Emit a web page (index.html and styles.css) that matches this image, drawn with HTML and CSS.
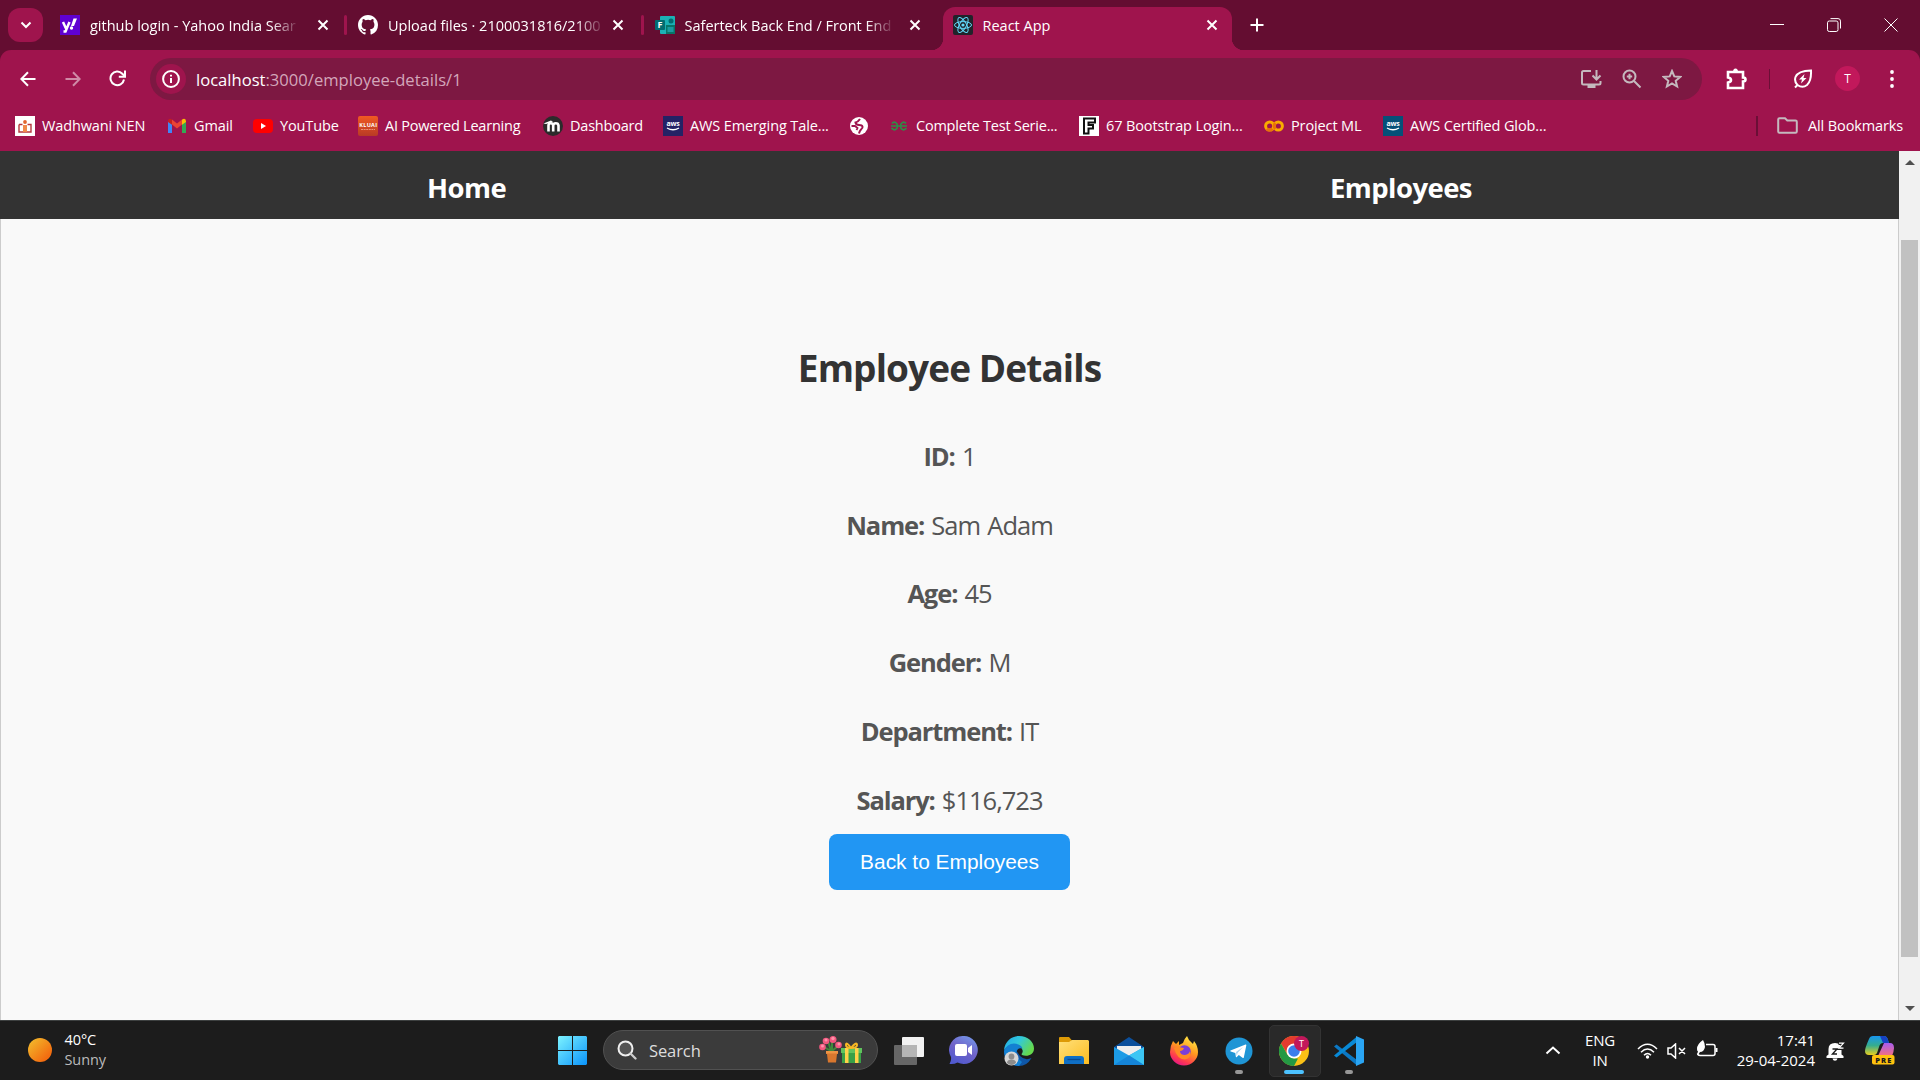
FILE: index.html
```html
<!DOCTYPE html>
<html lang="en">
<head>
<meta charset="utf-8">
<title>React App</title>
<link rel="stylesheet" href="styles.css">
</head>
<body>
<div class="desktop">
  <header class="titlebar">
    <button class="tab-search"><svg width="12" height="8" viewBox="0 0 12 8"><path d="M1.5 1.5 6 6l4.500-4.500" class="ln w2"/></svg></button>
    <div class="tab">
      <svg width="20" height="20" viewBox="0 0 20 20"><rect width="20" height="20" fill="#5f01d1"/><path d="M3 7l3 6.500M9.500 7 5.500 16.500H3.500" fill="none" stroke="#fff" stroke-width="2.500"/><path d="M13.500 3.500h3.500l-3 7.500h-3z" fill="#fff"/><circle cx="11.500" cy="13" r="1.700" fill="#fff"/></svg>
      <span class="tab-title fade">github login - Yahoo India Sear</span>
      <svg class="close" width="12" height="12" viewBox="0 0 12 12"><path d="M1.500 1.500l9 9M10.500 1.500l-9 9" class="ln w2"/></svg>
    </div>
    <div class="tab ruled">
      <svg width="20" height="20" viewBox="0 0 16 16"><path fill="#fff" d="M8 0C3.580 0 0 3.580 0 8c0 3.540 2.290 6.530 5.470 7.590.4.070.55-.17.55-.38v-1.490c-2.010.37-2.530-.49-2.690-.94-.09-.23-.48-.94-.82-1.130-.28-.15-.68-.52-.01-.53.63-.01 1.080.58 1.230.82.72 1.210 1.870.87 2.330.66.07-.52.280-.87.510-1.070-1.780-.2-3.640-.89-3.640-3.950 0-.87.31-1.590.82-2.150-.08-.2-.36-1.020.08-2.120 0 0 .67-.21 2.200.82a7.600 7.600 0 0 1 4 0c1.530-1.040 2.200-.82 2.200-.82.44 1.100.16 1.920.08 2.120.51.56.82 1.270.82 2.150 0 3.070-1.870 3.750-3.650 3.950.29.25.54.73.54 1.480v2.200c0 .21.15.46.55.38A8 8 0 0 0 16 8c0-4.420-3.580-8-8-8z"/></svg>
      <span class="tab-title fade">Upload files · 2100031816/2100</span>
      <svg class="close" width="12" height="12" viewBox="0 0 12 12"><path d="M1.500 1.500l9 9M10.500 1.500l-9 9" class="ln w2"/></svg>
    </div>
    <div class="tab ruled">
      <svg width="20" height="20" viewBox="0 0 20 20"><rect x="5" y="1" width="15" height="18" rx="1" fill="#1bb1b5"/><rect x="11" y="10" width="9" height="9" fill="#077568"/><circle cx="16" cy="6" r="2.500" fill="#036c70"/><rect x="12.500" y="12" width="6" height="5" fill="#1a9ba1"/><rect y="5" width="10" height="10" rx="1" fill="#036c70"/><text x="2.500" y="13.200" class="g b" font-size="9">F</text></svg>
      <span class="tab-title fade">Saferteck Back End / Front End</span>
      <svg class="close" width="12" height="12" viewBox="0 0 12 12"><path d="M1.500 1.500l9 9M10.500 1.500l-9 9" class="ln w2"/></svg>
    </div>
    <div class="tab active">
      <svg width="20" height="20" viewBox="0 0 20 20"><rect width="20" height="20" rx="2" fill="#20232a"/><g fill="none" stroke="#61dafb" stroke-width="1"><ellipse cx="10" cy="10" rx="8.500" ry="3.400"/><ellipse cx="10" cy="10" rx="8.500" ry="3.400" transform="rotate(60 10 10)"/><ellipse cx="10" cy="10" rx="8.500" ry="3.400" transform="rotate(120 10 10)"/></g><circle cx="10" cy="10" r="1.600" fill="#61dafb"/></svg>
      <span class="tab-title">React App</span>
      <svg class="close" width="12" height="12" viewBox="0 0 12 12"><path d="M1.500 1.500l9 9M10.500 1.500l-9 9" class="ln w2"/></svg>
    </div>
    <svg class="new-tab" width="14" height="14" viewBox="0 0 14 14"><path d="M7 .500v13M.500 7h13" class="ln w2"/></svg>
    <div class="window-controls">
      <svg width="14" height="14" viewBox="0 0 14 14"><path d="M0 6.500h14" class="ln"/></svg>
      <svg width="14" height="14" viewBox="0 0 14 14"><rect x=".5" y="3" width="10.500" height="10.500" rx="1.800" class="ln"/><path d="M3.500 .6h7.500a2.500 2.500 0 0 1 2.500 2.500v7.400" class="ln"/></svg>
      <svg width="14" height="14" viewBox="0 0 14 14"><path d="M.5 .5l13 13M13.500 .5l-13 13" class="ln"/></svg>
    </div>
  </header>

  <div class="toolbar">
    <div class="nav-buttons">
      <svg width="16" height="16" viewBox="0 0 16 16"><path d="M15.500 8H1.500M8 1.200 1.300 8 8 14.800" class="ln w2"/></svg>
      <svg class="dim" width="16" height="16" viewBox="0 0 16 16"><path d="M.5 8h14M8 1.200 14.700 8 8 14.800" class="ln w2"/></svg>
      <svg width="17" height="17" viewBox="0 0 17 17"><path d="M15 9.500A6.800 6.800 0 1 1 13.300 3.700L15.500 6" class="ln w2"/><path d="M16 .5v6.200H9.800" class="ln w2"/></svg>
    </div>
    <div class="omnibox">
      <span class="site-info"><svg width="18" height="18" viewBox="0 0 18 18"><circle cx="9" cy="9" r="7.900" class="ln w2"/><path d="M9 8v5M9 4.700v1.800" class="ln w2"/></svg></span>
      <span class="url">localhost<span>:3000/employee-details/1</span></span>
      <div class="omni-icons">
        <svg width="21" height="20" viewBox="0 0 21 20"><path d="M10 2H2.500Q1 2 1 3.500v10.500Q1 15.500 2.500 15.500H18Q19.500 15.500 19.500 14v-2M15.500 1v9M11.500 6.500l4 4 4-4" class="lg w2"/><path d="M6.500 15.500h8V19h-8z" fill="#c5b9be"/></svg>
        <svg width="20" height="20" viewBox="0 0 20 20"><circle cx="7.500" cy="7.500" r="6" class="lg w2"/><path d="M12 12l6.500 6.500M7.500 4.800v5.400M4.800 7.500h5.400" class="lg w2"/></svg>
        <svg width="20" height="20" viewBox="0 0 20 20"><path d="M10 2l2.300 5.400 5.900.5-4.500 3.900 1.400 5.700L10 14.400l-5.100 3.100 1.400-5.700L1.800 7.900l5.900-.5z" class="lg w2"/></svg>
      </div>
    </div>
    <div class="tool-icons">
      <svg width="21" height="22" viewBox="0 0 21 22"><path d="M2 4h15v5.500q2.500 0 2.500 2t-2.500 2V20H2v-5.500q3-.5 3-2.500T2 9.500z" class="ln w25"/><path d="M7 4q0-3.500 2.500-3.500T12 4z" fill="#fff"/></svg>
      <i class="rule"></i>
      <svg width="20" height="20" viewBox="0 0 20 20"><path d="M2 18.500 4.500 16Q1 12.500 2.500 8 5 1.800 18 1.500 18.500 12 14 16q-4.500 3.500-9.500 0" class="ln w2"/><path d="M11.500 5 6 10.500h3L8 14.500 13.500 9h-3z" fill="#fff"/></svg>
      <span class="avatar">T</span>
      <svg width="6" height="20" viewBox="0 0 6 20" fill="#fff"><circle cx="3" cy="3" r="1.900"/><circle cx="3" cy="10" r="1.900"/><circle cx="3" cy="17" r="1.900"/></svg>
    </div>
  </div>

  <div class="bookmarks">
    <a><svg width="20" height="20" viewBox="0 0 20 20"><rect width="20" height="20" fill="#fff"/><path d="M4 8.500h3.500M12.500 8.500H16V16H4V8.500" fill="none" stroke="#b5383d" stroke-width="1.400"/><path d="M8 16V9h4v7" fill="#f08a4b"/><circle cx="10" cy="6" r="1.900" fill="#e2662f"/></svg>Wadhwani NEN</a>
    <a><svg width="20" height="20" viewBox="0 0 20 20"><path d="M1 17V5l4 3v9z" fill="#4285f4"/><path d="M15 17V8l4-3v12z" fill="#34a853"/><path d="M5 3.500l5 4 5-4v5l-5 4-5-4z" fill="#ea4335"/><path d="M1 5.500Q1 2 4 3l1 .7v5.100L1 6z" fill="#c5221f"/><path d="M19 5.500Q19 2 16 3l-1 .7v5.100l4-2.800z" fill="#fbbc04"/></svg>Gmail</a>
    <a><svg width="20" height="20" viewBox="0 0 20 20"><rect y="3" width="20" height="14" rx="4" fill="#f00"/><path d="M8 7l5 3-5 3z" fill="#fff"/></svg>YouTube</a>
    <a><svg width="20" height="20" viewBox="0 0 20 20"><defs><linearGradient id="k" x2="0" y2="1"><stop stop-color="#f15a22"/><stop offset="1" stop-color="#b83a25"/></linearGradient></defs><rect width="20" height="20" rx="2" fill="url(#k)"/><text x="1.300" y="10.500" class="g b" font-size="5.500" textLength="17.500">KLUAI</text><path d="M3 13.500h14" stroke="#f6a58a" stroke-width=".8" stroke-dasharray="2 .6"/></svg>AI Powered Learning</a>
    <a><svg width="20" height="20" viewBox="0 0 20 20"><circle cx="10" cy="10" r="10" fill="#2b2b2b"/><path d="M5.500 15.500V9.500q0-2.300 2.300-2.300t2.400 2.300V15.500M10.200 9.500q.2-2.300 2.600-2.300t2.700 2.300v6" fill="none" stroke="#fff" stroke-width="2.600"/><path d="M.5 7.500 8 4.500 10 6 3 8z" fill="#fff"/></svg>Dashboard</a>
    <a><svg width="20" height="20" viewBox="0 0 20 20"><rect width="20" height="20" fill="#242265"/><text x="3.500" y="10" class="g b" font-size="7" textLength="13">aws</text><path d="M4 12q6 3.500 12 0" fill="none" stroke="#fff" stroke-width="1.300"/></svg>AWS Emerging Tale...</a>
    <a><svg width="18" height="18" viewBox="0 0 18 18"><circle cx="9" cy="9" r="9" fill="#fff"/><path d="M10 2Q8 5 5.500 5.500q.5 2.500 3.500 2.500t3.500 1.500-1.500 3Q9.500 14 9 16.500" fill="none" stroke="#9f144d" stroke-width="2"/><path d="M1.500 9h3.500l2.500 2-1 2" fill="none" stroke="#9f144d" stroke-width="1.800"/></svg></a>
    <a><svg width="20" height="20" viewBox="0 0 20 20"><path d="M3 7.500Q4.500 5.500 6.500 6.500 8.500 7.500 8.500 10t-2 3.500T2.500 12M17 7.500Q15.500 5.500 13.500 6.500q-2 1-2 3.500t2 3.500 4-1.500M2 10h16" fill="none" stroke="#2f8d46" stroke-width="1.700"/></svg>Complete Test Serie...</a>
    <a><svg width="20" height="20" viewBox="0 0 20 20"><rect width="20" height="20" fill="#fff"/><path d="M5 2.500h11v4H9.500V9H14v3.500H9.500v5H5z" fill="none" stroke="#111" stroke-width="2"/></svg>67 Bootstrap Login...</a>
    <a><svg width="20" height="20" viewBox="0 0 20 20"><circle cx="14.300" cy="10" r="4.100" fill="none" stroke="#f9ab00" stroke-width="3"/><circle cx="5.700" cy="10" r="4.100" fill="none" stroke="#f9ab00" stroke-width="3"/><path d="M8.600 12.900A4.100 4.100 0 0 1 2.800 12.900M11.400 7.100a4.100 4.100 0 0 0 0 5.800" fill="none" stroke="#e8710a" stroke-width="3"/></svg>Project ML</a>
    <a><svg width="20" height="20" viewBox="0 0 20 20"><rect width="20" height="20" fill="#055078"/><text x="3.500" y="10" class="g b" font-size="7" textLength="13">aws</text><path d="M4 12q6 3.500 12 0" fill="none" stroke="#fff" stroke-width="1.300"/></svg>AWS Certified Glob...</a>
    <i class="rule"></i>
    <a class="all"><svg width="21" height="17" viewBox="0 0 21 17"><path d="M1.200 14.500V2.500Q1.200 1.200 2.500 1.200H8l2.300 2.300h8.200q1.300 0 1.300 1.300v9.700q0 1.300-1.300 1.300h-16q-1.300 0-1.300-1.300z" class="lg w2"/></svg>All Bookmarks</a>
  </div>

  <div class="viewport">
    <div class="page">
      <nav class="site-nav"><a>Home</a><a>Employees</a></nav>
      <main class="details">
        <h2>Employee Details</h2>
        <p><strong>ID:</strong> 1</p>
        <p><strong>Name:</strong> Sam Adam</p>
        <p><strong>Age:</strong> 45</p>
        <p><strong>Gender:</strong> M</p>
        <p><strong>Department:</strong> IT</p>
        <p><strong>Salary:</strong> $116,723</p>
        <button class="back">Back to Employees</button>
      </main>
    </div>
    <div class="scrollbar">
      <svg width="10" height="5" viewBox="0 0 10 5"><path d="M0 5 5 0l5 5z" fill="#505050"/></svg>
      <div class="thumb"></div>
      <svg width="10" height="5" viewBox="0 0 10 5"><path d="M0 0l5 5 5-5z" fill="#505050"/></svg>
    </div>
  </div>

  <footer class="taskbar">
    <div class="weather">
      <i class="sun"></i>
      <div>40°C<small>Sunny</small></div>
    </div>
    <div class="apps">
      <span class="cell"><svg width="29" height="29" viewBox="0 0 29 29"><defs><linearGradient id="w" gradientUnits="userSpaceOnUse" x2="29" y2="29"><stop stop-color="#7df3ff"/><stop offset="1" stop-color="#0a93fb"/></linearGradient></defs><path fill="url(#w)" d="M1 0h13v14H0V1zM15 0h13l1 1v13H15zM0 15h14v14H1l-1-1zM15 15h14v13l-1 1H15z"/></svg></span>
      <div class="search">
        <svg width="20" height="20" viewBox="0 0 20 20"><circle cx="8.500" cy="8.500" r="7" fill="#555" stroke="#f0f0f0" stroke-width="2"/><path d="M13.500 13.500l5 5" stroke="#ccc" stroke-width="2.300" stroke-linecap="round"/></svg>
        <span>Search</span>
        <svg width="44" height="28" viewBox="0 0 44 28"><path d="M13 15V6M12 15 5 11M13 15l6-5M12 15 9 5" stroke="#3f8a3c" stroke-width="2" fill="none"/><g fill="#f2577f"><circle cx="7" cy="5" r="3.300"/><circle cx="14" cy="3.500" r="3.500"/><circle cx="3.500" cy="11" r="3.300"/><circle cx="19.500" cy="9" r="3.300"/></g><g fill="#ff91aa"><circle cx="7" cy="4" r="1.500"/><circle cx="14" cy="2.500" r="1.700"/><circle cx="3.500" cy="10" r="1.500"/><circle cx="20" cy="8" r="1.500"/></g><path d="M7 15h12v3h-1l-1 8.500H9L8 18H7z" fill="#d9772e"/><path d="M7 15h12v2.500H7z" fill="#ee9444"/><rect x="23" y="13" width="19" height="14" fill="#38a047"/><rect x="22" y="12" width="21" height="5" fill="#5fc35d"/><path d="M26 12h3.500v15H26zM36 12h3.500v15H36z" fill="#ffd24a"/><path d="M32 12q-5-7-5-3 0 3 5 3 6-7 6-3 0 3-6 3" fill="none" stroke="#f8b824" stroke-width="2"/></svg>
      </div>
      <span class="cell"><svg width="30" height="28" viewBox="0 0 30 28"><rect y="8" width="23" height="20" rx="1" fill="#666"/><rect x="8" width="22" height="20" rx="1" fill="#f2f2f2"/><path d="M8 8h15v12H8z" fill="#b5b5b5"/></svg></span>
      <span class="cell"><svg class="chat" width="29" height="29" viewBox="0 0 29 29"><defs><linearGradient id="c" x1=".8" x2=".3" y2="1"><stop stop-color="#7396e8"/><stop offset=".5" stop-color="#7063c8"/><stop offset="1" stop-color="#5059cf"/></linearGradient></defs><path d="M14.500 0a14 14 0 1 1-6 26.500Q5 28.500.5 28 2.500 25 2 21A14 14 0 0 1 14.500 0z" fill="url(#c)"/><rect x="6" y="8" width="12" height="12" rx="2" fill="#fff"/><path d="M19 12l4-3v10l-4-3z" fill="#fff"/></svg></span>
      <span class="cell"><svg width="32" height="30" viewBox="0 0 32 30"><defs><linearGradient id="e" x2="1" y2=".5"><stop stop-color="#20a7e8"/><stop offset=".5" stop-color="#31c9dc"/><stop offset="1" stop-color="#65d94e"/></linearGradient></defs><path d="M1 15Q1 29 16 30q8 0 12.500-8Q22 25 17 20L10 10Q3 10 1 15z" fill="#0f57a8"/><path d="M1 14C2 5 9 0 16 0c9 0 15 6 15 12.500 0 6.500-7 8.500-12 6.500-1.500-1 1.500-2 .5-5C18 9 8 5 1 14z" fill="url(#e)"/><path d="M1 15Q4 7.500 11 7.500q7 .5 8.500 5-5-1.500-6 3.500T19 26l-3 4Q2 29 1 15z" fill="#1380d2"/><circle cx="8.500" cy="22.500" r="7" fill="#d6d6d6"/><circle cx="8.500" cy="20.500" r="2.900" fill="#8c8c8c"/><path d="M4 27q0-3.500 4.500-3.500T13 27q-4.500 4-9 0z" fill="#8c8c8c"/></svg></span>
      <span class="cell"><svg width="30" height="27" viewBox="0 0 30 27"><path d="M0 1Q0 0 1 0h9l3 3.500V8H0z" fill="#dd9a06"/><defs><linearGradient id="f" x2="1" y2="1"><stop stop-color="#ffe07a"/><stop offset="1" stop-color="#fcbc20"/></linearGradient></defs><path d="M0 5h10l3-2h16l1 1v23H0z" fill="url(#f)"/><path d="M5 27v-5q0-3 3-3h14q3 0 3 3v5z" fill="#0f6fc5"/><path d="M8.500 22.500h13" stroke="#0a4a91" stroke-width="1.300"/></svg></span>
      <span class="cell"><svg width="30" height="28" viewBox="0 0 30 28"><path d="M0 10 15 0l15 10v4H0z" fill="#0b4f9c"/><path d="M3 9h24v12H3z" fill="#eee"/><path d="M0 10l15 8.500L30 10v18H0z" fill="#1c9be6"/><path d="M30 10v18L15 18.500z" fill="#3cc6f4"/><path d="M0 28l15-9.500L30 28z" fill="#1585d8"/></svg></span>
      <span class="cell"><svg width="30" height="30" viewBox="0 0 30 30"><defs><linearGradient id="ff" x1=".8" x2=".3" y2="1"><stop stop-color="#fff04a"/><stop offset=".45" stop-color="#ff9a1f"/><stop offset=".8" stop-color="#ff3a50"/><stop offset="1" stop-color="#e31587"/></linearGradient></defs><path d="M4 5l3 3 3-3v4l4-2q1-4 4-7l2 4 4 4 1-3q4 5 4 11a14 13.500 0 0 1-28 0Q1 10 4 5z" fill="url(#ff)"/><circle cx="15.500" cy="15.500" r="6.300" fill="#7a3fd8"/><path d="M5 12q4-2 7-.500l3 .5q-1 3-4 3 0 4 5 4 4-.5 5-4 2 7-5 8.500-8 0-11-11.500z" fill="#ff8a24"/></svg></span>
      <span class="cell running"><svg width="28" height="28" viewBox="0 0 28 28"><circle cx="14" cy="14" r="13.500" fill="#1f95d5"/><path d="M5.500 13.500 20.500 7.500q1-.3.800 1l-2.500 12q-.3 1-1.300.3l-3.700-2.700-2 2q-.8.5-1-.5l-.5-3.500-4.600-1.500q-.8-.4-.2-1.100z" fill="#fff"/><path d="M11 15l7-5-5.500 6-.7 3z" fill="#a9d4ee"/></svg></span>
      <span class="cell current"><svg width="30" height="30" viewBox="0 0 30 30"><circle cx="15" cy="15" r="15" fill="#fbc116"/><path d="M2 7.500A15 15 0 0 1 28 7.500H15L9 19z" fill="#e33b2e"/><path d="M2 7.500 8.500 18.800 15 22.500H19L15 30A15 15 0 0 1 2 7.500z" fill="#249944"/><circle cx="15" cy="15" r="7.500" fill="#fff"/><circle cx="15" cy="15" r="5.800" fill="#3b7ded"/><circle cx="22.500" cy="7.500" r="7.500" fill="#c2185b"/><text x="22.500" y="11" class="g" font-size="9" text-anchor="middle">T</text></svg></span>
      <span class="cell running"><svg width="30" height="30" viewBox="0 0 30 30"><path d="M0 10.500 2.500 8.500 23 24v5.500z" fill="#0b78c4"/><path d="M0 19.500 2.500 21.500 23 6V.5z" fill="#0889d6"/><path d="M22 0l8 3.500v23L22 30z" fill="#2aa5f3"/></svg></span>
    </div>
    <div class="tray">
      <svg class="up" width="16" height="9" viewBox="0 0 16 9"><path d="M1.500 7.500 8 1.500l6.500 6" class="ln w2"/></svg>
      <div class="lang">ENG<br>IN</div>
      <svg class="wifi" width="21" height="16" viewBox="0 0 21 16"><path d="M1 6q9.500-9.500 19 0M4 9.200q6.500-6.500 13 0M7 12.200q3.500-3.500 7 0" class="ln w15"/><circle cx="10.500" cy="14" r="1.700" fill="#fff"/></svg>
      <svg class="vol" width="20" height="16" viewBox="0 0 20 16"><path d="M1 5h3l4.500-4v14L4 11H1zM12 5l6 6M18 5l-6 6" class="ln w15"/></svg>
      <svg class="bat" width="22" height="18" viewBox="0 0 22 18"><path d="M10 4.500h7q2 0 2 2v7q0 2-2 2H4q-2 0-2.500-2" class="ln w15"/><path d="M19.500 8h2v4h-2z" fill="#fff"/><path d="M1 9Q1 4 7 0q2 3 2 7-1 5-5 5l-2 3-1-.5 1-3Q1 11 1 9z" fill="#fff"/></svg>
      <div class="clock">17:41<br>29-04-2024</div>
      <svg class="bell" width="20" height="20" viewBox="0 0 20 20"><path d="M.5 17v-2l2-1.500V8Q2.500 2 9 2t6.500 6v5.500l2 1.500v2zM6.500 17.500h5q-.5 2.300-2.500 2.300t-2.500-2.300z" fill="#fff"/><path d="M6.500 8h4.500l-4.500 5h4.500M12.500 3.200H17l-4.500 5H17" fill="none" stroke="#1c1c1c" stroke-width="1.400"/><path d="M13 2.200h4.500l-4.500 5h4.500" fill="none" stroke="#fff" stroke-width="1.200"/></svg>
      <svg class="copilot" width="30" height="29" viewBox="0 0 30 29"><defs><linearGradient id="p1" x2="0" y2="1"><stop stop-color="#1797f0"/><stop offset=".5" stop-color="#35ad8e"/><stop offset="1" stop-color="#e9cf1e"/></linearGradient><linearGradient id="p2" x2="0" y2="1"><stop stop-color="#a65cf0"/><stop offset="1" stop-color="#f6707c"/></linearGradient></defs><path d="M8 0h11q3 0 4 4l1 3h-6q-3 0-4 4l-2 6q-1 2-3 2H4q-4 0-4-4 0-3 4-12 1-3 4-3z" fill="url(#p1)"/><path d="M15 0h4q3 0 4 4l1 3h-6z" fill="#1641c2"/><path d="M19 7h6q4 0 4 5 0 3-2 8H13z" fill="url(#p2)"/><rect x="7" y="19" width="22.500" height="9.500" rx="2" fill="#ffc20e"/><text x="10.300" y="26.600" font-family="Open Sans" font-weight="800" font-size="7.500" fill="#1a1a1a" textLength="16">PRE</text></svg>
    </div>
  </footer>
</div>
</body>
</html>
```
FILE: styles.css
```css
* { box-sizing: border-box; }
body { margin: 0; font-family: "Open Sans", "Noto Sans", sans-serif; color: #fff; }
svg { display: block; flex: none; }
button { border: 0; padding: 0; font: inherit; color: inherit; }
.ln { fill: none; stroke: #fff; stroke-width: 1; }
.lg { fill: none; stroke: #c5b9be; stroke-width: 1; }
.w15 { stroke-width: 1.5; }
.w2 { stroke-width: 2; }
.w25 { stroke-width: 2.6; }
.g { fill: #fff; font-family: "Open Sans", sans-serif; }
.b { font-weight: 700; }

.desktop { width: 1920px; height: 1080px; display: grid; grid-template-rows: 50px 57px 44px 869px 60px; overflow: hidden; background: #640d31; }

/* tab strip */
.titlebar { display: grid; grid-template-columns: 35px 298px 297.5px 300px 293px 50px 1fr; padding-left: 8px; font-size: 14.5px; background: #640d31; }
.tab-search { width: 35px; height: 34px; margin-top: 8px; border-radius: 12px; background: #9f144d; display: grid; place-items: center; }
.tab { display: flex; align-items: center; height: 50px; padding: 0 12.500px 0 17px; position: relative; }
.tab-title { margin-left: 10px; white-space: nowrap; line-height: 24px; padding-top: 1px; }
.fade { -webkit-mask-image: linear-gradient(90deg, #000 88%, rgba(0, 0, 0, .15)); mask-image: linear-gradient(90deg, #000 88%, rgba(0, 0, 0, .15)); }
.close { margin-left: auto; }
.ruled::before { content: ""; position: absolute; left: 3px; top: 15px; width: 3px; height: 20px; border-radius: 2px; background: #9f144d; }
.tab.ruled { padding-right: 15px; }
.tab.ruled + .ruled { padding: 0 18px 0 16px; }
.ruled + .ruled::before { left: 2px; }
.tab.ruled + .active { height: 43px; margin: 7px 0 0 4px; padding: 0 14px 7px 10px; background: #9f144d; border-radius: 12px 12px 0 0; }
.active::before, .active::after { content: ""; position: absolute; bottom: 0; width: 12px; height: 12px; }
.active::before { left: -12px; background: radial-gradient(circle at 0 0, transparent 12px, #9f144d 12.5px); }
.active::after { right: -12px; background: radial-gradient(circle at 100% 0, transparent 12px, #9f144d 12.5px); }
.new-tab { margin: 18px 0 0 18.500px; }
.window-controls { display: flex; justify-content: flex-end; gap: 43px; padding: 18px 22px 0 0; }

/* address bar */
.toolbar { display: flex; align-items: center; background: #9f144d; border-radius: 11px 11px 0 0; padding-left: 20px; }
.nav-buttons { display: flex; align-items: center; gap: 28.500px; width: 130px; }
.dim { opacity: .5; }
.omnibox { display: flex; align-items: center; width: 1552px; height: 42px; border-radius: 21px; background: #7d1842; padding: 0 20px 0 6px; }
.site-info { width: 30px; height: 30px; border-radius: 50%; background: #9f144d; display: grid; place-items: center; }
.url { margin-left: 10px; font-size: 16.6px; padding-top: 1px; }
.url span { color: #d3a6ba; }
.omni-icons { display: flex; gap: 20px; margin-left: auto; align-items: center; }
.tool-icons { display: flex; align-items: center; width: 218px; padding-left: 24px; }
.tool-icons .rule { width: 1px; height: 20px; background: #6b0f36; margin: 0 23px 0 22px; }
.avatar { width: 25px; height: 25px; border-radius: 50%; background: #c2185b; margin: 0 29px 0 22px; text-align: center; font-size: 12px; line-height: 25px; }

/* bookmarks bar */
.bookmarks { display: grid; grid-template-columns: 152px 86px 105px 185px 120px 187px 39px 190px 185px 119px 1fr 21px 143px; align-items: center; background: #9f144d; padding: 0 0 7px 15px; font-size: 14.5px; letter-spacing: -.12px; }
.bookmarks a { display: flex; align-items: center; gap: 7px; white-space: nowrap; }
.bookmarks .all { gap: 10px; }
.bookmarks .rule { width: 2px; height: 20px; background: #6b0f36; }
.bookmarks a:nth-child(4), .bookmarks a:nth-child(5), .bookmarks a:nth-child(8) { letter-spacing: -.22px; }

/* web page */
.viewport { display: grid; grid-template-columns: 1899px 21px; overflow: hidden; }
.page { background: #f9f9f9; }
.site-nav { height: 68px; padding: 4px 427px 0; display: flex; justify-content: space-between; align-items: center; background: #333; font-size: 27.500px; font-weight: 700; letter-spacing: -.55px; }
.details { height: 801px; display: flex; flex-direction: column; align-items: center; border: 1px solid #ccc; border-width: 0 1px; padding-top: 124px; color: #555; }
h2 { margin: 0 0 29px; font-size: 37px; line-height: 50px; letter-spacing: -.9px; color: #333; }
.details p { margin: 0; font-size: 25.500px; line-height: 68.7px; font-weight: 400; letter-spacing: -1px; word-spacing: 1.500px; }
.details strong { font-weight: 700; letter-spacing: -1.1px; }
.back { width: 241px; height: 56px; border-radius: 8px; background: #2196f3; color: #fff; font: 20.900px "Liberation Sans", Arial, sans-serif; }
.scrollbar { background: #f1f1f1; display: flex; flex-direction: column; align-items: center; padding: 9px 0; }
.thumb { width: 17px; height: 717px; margin: 75px 0 auto; background: #c1c1c1; }

/* taskbar */
.taskbar { display: grid; grid-template-columns: 545px 832px 1fr; background: #1c1c1c; border-top: 1px solid #3d4040; font-size: 15px; }
.weather { display: flex; align-items: center; padding: 0 0 2px 28px; line-height: 20px; letter-spacing: -.1px; font-size: 14.5px; }
.weather small { display: block; color: #bbb; font-size: 14.5px; letter-spacing: -.1px; }
.sun { width: 24px; height: 24px; border-radius: 50%; background: linear-gradient(135deg, #f2c12e, #f36c10 80%); margin-right: 12.500px; }
.apps { display: flex; align-items: center; }
.cell { width: 55px; height: 59px; display: grid; place-items: center; position: relative; }
.chat { margin-right: 2px; }
.search { width: 275px; height: 40px; margin: 0 3.500px 1px 3px; border-radius: 20px; background: #3b3b3b; border: 1px solid #515151; display: flex; align-items: center; padding: 0 14px 0 13px; color: #ddd; font-size: 16.500px; letter-spacing: -.1px; }
.search span { margin: 0 auto 0 12px; }
.running::after, .current::after { content: ""; position: absolute; bottom: 6px; left: 23.500px; width: 8px; height: 4px; border-radius: 2px; background: #969696; }
.current::after { left: 17.500px; width: 20px; background: #4cc2ff; }
.current::before { content: ""; position: absolute; left: 2.500px; top: 4px; width: 50px; height: 50px; border-radius: 5px; background: #292929; border: 1px solid #333; }
.current svg { position: relative; }
.tray { display: flex; align-items: center; justify-content: flex-end; padding-right: 25px; line-height: 20px; font-size: 15px; }
.lang { width: 48px; margin: 0 13px 1px 15px; text-align: center; letter-spacing: -.2px; }
.wifi { margin-right: 9px; }
.vol { margin-right: 9px; }
.clock { width: 97px; text-align: right; margin: 0 11px 2px 0; }
.bell { margin-right: 19px; }
.bat { margin-bottom: 3px; }
```
